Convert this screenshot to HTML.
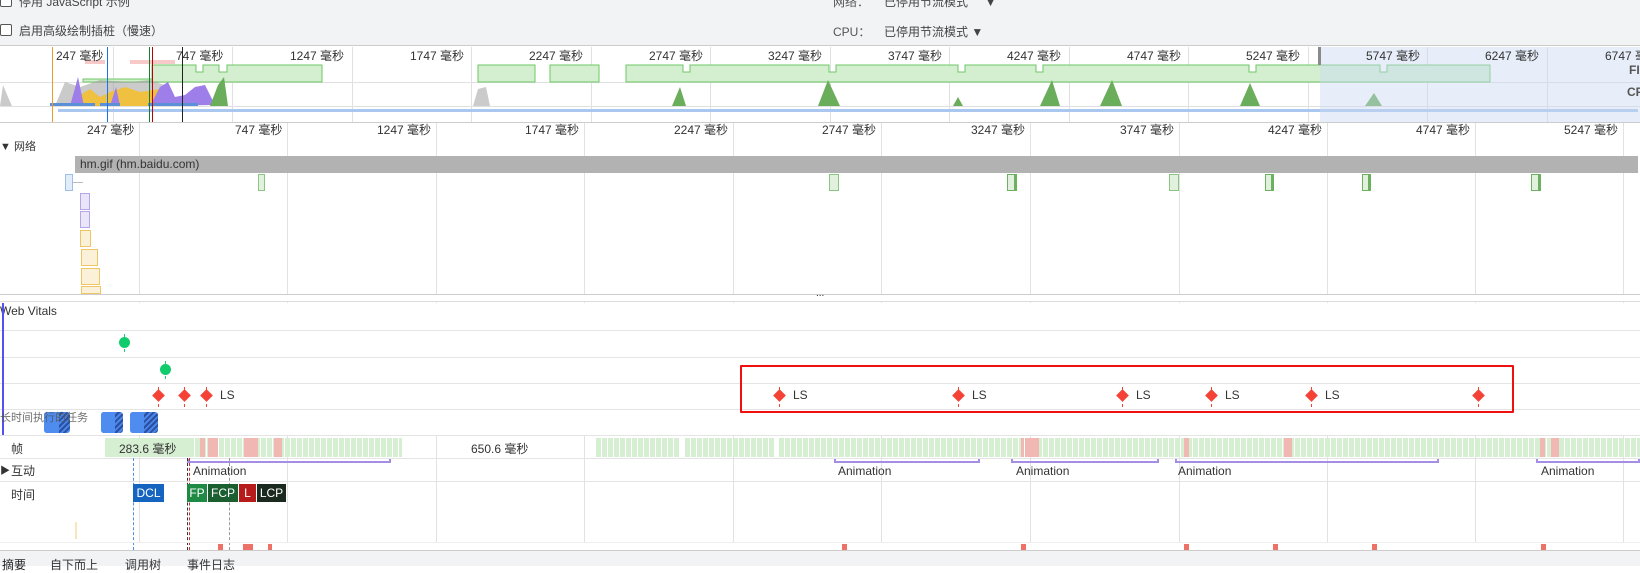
<!DOCTYPE html>
<html><head><meta charset="utf-8"><style>
*{margin:0;padding:0;box-sizing:border-box}
body{width:1640px;height:566px;overflow:hidden;background:#fff;font-family:"Liberation Sans","Noto Sans CJK SC",sans-serif;font-size:12px;color:#333;position:relative}
.a{position:absolute}
.t{position:absolute;white-space:nowrap}
.vl{position:absolute;width:1px;background:#e2e2e2}
.hl{position:absolute;height:1px;background:#e4e4e4;left:0;width:1640px}
.cb{position:absolute;width:12px;height:12px;border:1px solid #555;border-radius:2px;background:#fff}
.fr{position:absolute;top:438px;height:19px;background:repeating-linear-gradient(90deg,#d6efd2 0 5px,#fff 5px 6px)}
.rf{position:absolute;top:438px;height:19px;background:#f0b7b3}
.an{position:absolute;top:459px;height:4px;border:2px solid #a58fe6;border-top:none}
.anl{position:absolute;top:464px;color:#333}
.dm{position:absolute;width:9px;height:9px;background:#f44336;transform:rotate(45deg)}
.dd{position:absolute;width:0;border-left:1px dashed #f44336}
.mk{position:absolute;top:484px;height:18px;color:#fff;font-size:12px;line-height:18px;text-align:center}
</style></head><body>
<!-- toolbar -->
<div class="a" style="left:0;top:0;width:1640px;height:46px;background:#f1f3f4;border-bottom:1px solid #ccc"></div>
<div class="cb" style="top:-5px;left:0"></div>
<div class="t" style="left:19px;top:-7px;color:#444">停用 JavaScript 示例</div>
<div class="cb" style="top:24px;left:0"></div>
<div class="t" style="left:19px;top:22px;color:#444">启用高级绘制插桩（慢速）</div>
<div class="t" style="left:833px;top:-7px;color:#555">网络：</div>
<div class="t" style="left:884px;top:-7px;color:#444">已停用节流模式 &nbsp; &nbsp; ▼</div>
<div class="t" style="left:833px;top:23px;color:#555">CPU：</div>
<div class="t" style="left:884px;top:23px;color:#444">已停用节流模式 ▼</div>

<!-- overview -->
<svg class="a" style="left:0;top:47px" width="1640" height="76">
<g stroke="#e0e0e0" stroke-width="1">
<line x1="113.5" y1="0" x2="113.5" y2="76"/><line x1="232.5" y1="0" x2="232.5" y2="76"/><line x1="352.5" y1="0" x2="352.5" y2="76"/><line x1="471.5" y1="0" x2="471.5" y2="76"/><line x1="591.5" y1="0" x2="591.5" y2="76"/><line x1="710.5" y1="0" x2="710.5" y2="76"/><line x1="830.5" y1="0" x2="830.5" y2="76"/><line x1="949.5" y1="0" x2="949.5" y2="76"/><line x1="1069.5" y1="0" x2="1069.5" y2="76"/><line x1="1188.5" y1="0" x2="1188.5" y2="76"/><line x1="1308.5" y1="0" x2="1308.5" y2="76"/><line x1="1427.5" y1="0" x2="1427.5" y2="76"/><line x1="1547.5" y1="0" x2="1547.5" y2="76"/>
<line x1="0" y1="35.5" x2="1640" y2="35.5"/><line x1="0" y1="59.5" x2="1640" y2="59.5"/>
</g>
<g fill="#d4efcf" stroke="#6bc764" stroke-width="1">
<path d="M83 35V32H152V35Z"/>
<path d="M152 35V18H196V25H203V18H219V25H227V18H322V35Z"/>
<path d="M478 35V18H535V35Z"/><path d="M550 35V18H599V35Z"/>
<path d="M626 35V18H683V25H690V18H829V25H836V18H958V25H965V18H1036V25H1043V18H1249V25H1256V18H1380V25H1387V18H1490V35Z"/>
</g>
<g fill="#a0a0a0" opacity=".55"><path d="M0 59L3 38 8 50 12 59Z"/><path d="M55 59L65 35 80 40 100 33 130 35 150 33 170 40 175 59Z"/><path d="M473 59L478 42 486 40 490 59Z"/></g>
<path d="M70 59L80 48 90 42 100 50 110 45 125 40 140 45 160 42 175 55 185 59Z" fill="#f0c040"/>
<path d="M70 59L78 30 84 59Z M110 59L116 40 120 59Z M150 59L160 40 168 35 175 50 185 48 195 40 205 38 215 58Z" fill="#9e7ee8"/>
<path d="M210 59L218 38 224 30 228 59Z" fill="#6aad5a"/>
<g fill="#6aad5a"><path d="M672 59L680 40 686 59Z"/><path d="M818 59L828 33 840 59Z"/><path d="M953 59L958 50 963 59Z"/><path d="M1040 59L1052 33 1060 59Z"/><path d="M1100 59L1112 33 1122 59Z"/><path d="M1240 59L1250 36 1260 59Z"/><path d="M1365 59L1374 46 1382 59Z"/></g>
<rect x="50" y="56" width="45" height="3" fill="#5b8fd6"/><rect x="100" y="56" width="20" height="3" fill="#5b8fd6"/><rect x="148" y="56" width="50" height="3" fill="#5b8fd6"/>
<rect x="58" y="62" width="1580" height="3" fill="#a9c7ef"/>
<rect x="85" y="13" width="20" height="4" fill="#f7c9c9"/><rect x="130" y="13" width="45" height="4" fill="#f7c9c9"/>
<line x1="52.5" y1="0" x2="52.5" y2="76" stroke="#f09a2a"/><line x1="107.5" y1="0" x2="107.5" y2="76" stroke="#1a73e8"/><line x1="149.5" y1="0" x2="149.5" y2="76" stroke="#1e7a36"/><line x1="152.5" y1="0" x2="152.5" y2="76" stroke="#b00"/><line x1="182.5" y1="0" x2="182.5" y2="76" stroke="#222"/>
<rect x="1320" y="0" width="320" height="76" fill="#c9d9f2" opacity=".45"/>
<rect x="1318" y="0" width="3" height="18" fill="#8a8a8a"/>
</svg>
<div class="t" style="left:56px;top:47px;font-size:12px">247 毫秒</div>
<div class="t" style="left:176px;top:47px">747 毫秒</div>
<div class="t" style="left:290px;top:47px">1247 毫秒</div>
<div class="t" style="left:410px;top:47px">1747 毫秒</div>
<div class="t" style="left:529px;top:47px">2247 毫秒</div>
<div class="t" style="left:649px;top:47px">2747 毫秒</div>
<div class="t" style="left:768px;top:47px">3247 毫秒</div>
<div class="t" style="left:888px;top:47px">3747 毫秒</div>
<div class="t" style="left:1007px;top:47px">4247 毫秒</div>
<div class="t" style="left:1127px;top:47px">4747 毫秒</div>
<div class="t" style="left:1246px;top:47px">5247 毫秒</div>
<div class="t" style="left:1366px;top:47px">5747 毫秒</div>
<div class="t" style="left:1485px;top:47px">6247 毫秒</div>
<div class="t" style="left:1605px;top:47px">6747 毫</div>
<div class="t" style="left:1629px;top:63px;font-weight:bold;color:#555">FI</div>
<div class="t" style="left:1627px;top:85px;font-weight:bold;color:#555">CP</div>
<div class="hl" style="top:122px;background:#ccc"></div>

<!-- main grid lines -->
<div class="vl" style="left:139px;top:123px;height:420px"></div>
<div class="vl" style="left:287px;top:123px;height:420px"></div>
<div class="vl" style="left:436px;top:123px;height:420px"></div>
<div class="vl" style="left:584px;top:123px;height:420px"></div>
<div class="vl" style="left:733px;top:123px;height:420px"></div>
<div class="vl" style="left:881px;top:123px;height:420px"></div>
<div class="vl" style="left:1030px;top:123px;height:420px"></div>
<div class="vl" style="left:1179px;top:123px;height:420px"></div>
<div class="vl" style="left:1327px;top:123px;height:420px"></div>
<div class="vl" style="left:1475px;top:123px;height:420px"></div>
<div class="vl" style="left:1623px;top:123px;height:420px"></div>
<div class="t" style="left:87px;top:121px">247 毫秒</div>
<div class="t" style="left:235px;top:121px">747 毫秒</div>
<div class="t" style="left:377px;top:121px">1247 毫秒</div>
<div class="t" style="left:525px;top:121px">1747 毫秒</div>
<div class="t" style="left:674px;top:121px">2247 毫秒</div>
<div class="t" style="left:822px;top:121px">2747 毫秒</div>
<div class="t" style="left:971px;top:121px">3247 毫秒</div>
<div class="t" style="left:1120px;top:121px">3747 毫秒</div>
<div class="t" style="left:1268px;top:121px">4247 毫秒</div>
<div class="t" style="left:1416px;top:121px">4747 毫秒</div>
<div class="t" style="left:1564px;top:121px">5247 毫秒</div>

<!-- network -->
<div class="t" style="left:0;top:138px;font-size:11px">▼ 网络</div>
<div class="a" style="left:75px;top:156px;width:1563px;height:17px;background:#b2b2b2"></div>
<div class="t" style="left:80px;top:157px;color:#333">hm.gif (hm.baidu.com)</div>
<div class="a" style="left:65px;top:174px;width:8px;height:17px;background:#e3ecf9;border:1px solid #9ebde9"></div><div class="a" style="left:73px;top:182px;width:10px;height:1px;background:#bbb"></div>
<div class="a" style="left:80px;top:193px;width:10px;height:17px;background:#ebe5fa;border:1px solid #b7a5ea"></div>
<div class="a" style="left:80px;top:211px;width:10px;height:17px;background:#ebe5fa;border:1px solid #b7a5ea"></div>
<div class="a" style="left:80px;top:230px;width:11px;height:17px;background:#fbf0d8;border:1px solid #f0c565"></div>
<div class="a" style="left:81px;top:249px;width:17px;height:17px;background:#fbf0d8;border:1px solid #f0c565"></div>
<div class="a" style="left:81px;top:268px;width:19px;height:17px;background:#fbf0d8;border:1px solid #f0c565"></div>
<div class="a" style="left:81px;top:286px;width:20px;height:8px;background:#fbf0d8;border:1px solid #f0c565"></div>
<div class="a" style="left:258px;top:174px;width:7px;height:17px;background:#e2f0de;border:1px solid #8ac682"></div>
<div class="a" style="left:829px;top:174px;width:10px;height:17px;background:#e2f0de;border:1px solid #8ac682"></div>
<div class="a" style="left:1007px;top:174px;width:10px;height:17px;background:#e2f0de;border:1px solid #6bb15f;border-right-width:3px"></div>
<div class="a" style="left:1169px;top:174px;width:10px;height:17px;background:#e2f0de;border:1px solid #8ac682"></div>
<div class="a" style="left:1265px;top:174px;width:9px;height:17px;background:#e2f0de;border:1px solid #6bb15f;border-right-width:3px"></div>
<div class="a" style="left:1362px;top:174px;width:9px;height:17px;background:#e2f0de;border:1px solid #6bb15f;border-right-width:3px"></div>
<div class="a" style="left:1531px;top:174px;width:10px;height:17px;background:#e2f0de;border:1px solid #6bb15f;border-right-width:3px"></div>
<div class="a" style="left:0;top:294px;width:1640px;height:8px;background:#fff;border-top:1px solid #ccc;border-bottom:1px solid #ddd"></div>
<div class="t" style="left:816px;top:288px;font-size:10px">...</div>

<!-- web vitals -->
<div class="a" style="left:0;top:303px;width:1640px;height:132px;background:#fff"></div>
<div class="t" style="left:0;top:304px">Web Vitals</div>
<div class="hl" style="top:330px"></div><div class="hl" style="top:357px"></div><div class="hl" style="top:383px"></div><div class="hl" style="top:409px"></div><div class="hl" style="top:435px"></div>
<div class="a" style="left:2px;top:303px;width:2px;height:132px;background:#5252f0"></div>
<div class="dd" style="left:124px;top:334px;height:18px;border-color:#1ccb74"></div>
<div class="a" style="left:119px;top:337px;width:11px;height:11px;border-radius:50%;background:#10cc6c"></div>
<div class="dd" style="left:165px;top:361px;height:18px;border-color:#1ccb74"></div>
<div class="a" style="left:160px;top:364px;width:11px;height:11px;border-radius:50%;background:#10cc6c"></div>
<div class="dd" style="left:158px;top:387px;height:20px"></div><div class="dm" style="left:154px;top:391px"></div>
<div class="dd" style="left:184px;top:387px;height:20px"></div><div class="dm" style="left:180px;top:391px"></div>
<div class="dd" style="left:206px;top:387px;height:20px"></div><div class="dm" style="left:202px;top:391px"></div>
<div class="t" style="left:220px;top:388px">LS</div>
<div class="dd" style="left:779px;top:387px;height:20px"></div><div class="dm" style="left:775px;top:391px"></div><div class="t" style="left:793px;top:388px">LS</div>
<div class="dd" style="left:958px;top:387px;height:20px"></div><div class="dm" style="left:954px;top:391px"></div><div class="t" style="left:972px;top:388px">LS</div>
<div class="dd" style="left:1122px;top:387px;height:20px"></div><div class="dm" style="left:1118px;top:391px"></div><div class="t" style="left:1136px;top:388px">LS</div>
<div class="dd" style="left:1211px;top:387px;height:20px"></div><div class="dm" style="left:1207px;top:391px"></div><div class="t" style="left:1225px;top:388px">LS</div>
<div class="dd" style="left:1311px;top:387px;height:20px"></div><div class="dm" style="left:1307px;top:391px"></div><div class="t" style="left:1325px;top:388px">LS</div>
<div class="dd" style="left:1478px;top:387px;height:20px"></div><div class="dm" style="left:1474px;top:391px"></div>
<div class="a" style="left:740px;top:365px;width:774px;height:48px;border:2px solid #f01010;border-radius:1px"></div>
<!-- long tasks -->
<div class="a" style="left:44px;top:412px;width:26px;height:21px;border-radius:3px;background:repeating-linear-gradient(135deg,#2a4fa0 0 2px,#4a86e8 2px 4px)"></div>
<div class="a" style="left:44px;top:412px;width:15px;height:21px;border-radius:3px 0 0 3px;background:#4f8cf0"></div>
<div class="a" style="left:101px;top:412px;width:22px;height:21px;border-radius:3px;background:repeating-linear-gradient(135deg,#2a4fa0 0 2px,#4a86e8 2px 4px)"></div>
<div class="a" style="left:101px;top:412px;width:14px;height:21px;border-radius:3px 0 0 3px;background:#4f8cf0"></div>
<div class="a" style="left:130px;top:412px;width:28px;height:21px;border-radius:3px;background:repeating-linear-gradient(135deg,#2a4fa0 0 2px,#4a86e8 2px 4px)"></div>
<div class="a" style="left:130px;top:412px;width:14px;height:21px;border-radius:3px 0 0 3px;background:#4f8cf0"></div>
<div class="t" style="left:0;top:409px;color:#555;font-size:11px;opacity:.85">长时间执行的任务</div>

<!-- frames -->
<div class="t" style="left:11px;top:440px">帧</div>
<div class="a" style="left:105px;top:438px;width:84px;height:19px;background:#d6efd2"></div>
<div class="fr" style="left:189px;width:213px"></div>
<div class="rf" style="left:200px;width:5px"></div><div class="rf" style="left:208px;width:10px"></div><div class="rf" style="left:244px;width:14px"></div><div class="rf" style="left:274px;width:8px"></div>
<div class="t" style="left:119px;top:440px">283.6 毫秒</div>
<div class="t" style="left:471px;top:440px">650.6 毫秒</div>
<div class="fr" style="left:596px;width:84px"></div>
<div class="fr" style="left:685px;width:89px"></div>
<div class="fr" style="left:779px;width:861px"></div>
<div class="rf" style="left:1021px;width:3px"></div><div class="rf" style="left:1025px;width:14px"></div><div class="rf" style="left:1184px;width:5px"></div><div class="rf" style="left:1284px;width:8px"></div><div class="rf" style="left:1540px;width:5px"></div><div class="rf" style="left:1551px;width:8px"></div>
<div class="hl" style="top:458px"></div>
<!-- interactions -->
<div class="t" style="left:0;top:462px;font-size:10px">▶</div><div class="t" style="left:11px;top:462px">互动</div>
<div class="an" style="left:187px;width:204px"></div><div class="anl" style="left:193px">Animation</div>
<div class="an" style="left:834px;width:146px"></div><div class="anl" style="left:838px">Animation</div>
<div class="an" style="left:1011px;width:148px"></div><div class="anl" style="left:1016px">Animation</div>
<div class="an" style="left:1175px;width:264px"></div><div class="anl" style="left:1178px">Animation</div>
<div class="an" style="left:1536px;width:104px"></div><div class="anl" style="left:1541px">Animation</div>
<div class="hl" style="top:481px"></div>
<!-- timings -->
<div class="t" style="left:11px;top:486px">时间</div>
<div class="dd" style="left:133px;top:458px;height:92px;border-left-color:#4f8ee0"></div>
<div class="dd" style="left:187px;top:458px;height:92px;border-left-color:#333"></div>
<div class="dd" style="left:189px;top:458px;height:92px;border-left-color:#c33"></div>
<div class="dd" style="left:229px;top:458px;height:92px;border-left-color:#999"></div>
<div class="mk" style="left:133px;width:31px;background:#1565c0">DCL</div>
<div class="mk" style="left:187px;width:20px;background:#1e8a43">FP</div>
<div class="mk" style="left:208px;width:30px;background:#1b5e30">FCP</div>
<div class="mk" style="left:239px;width:17px;background:#b71c1c">L</div>
<div class="mk" style="left:257px;width:29px;background:#1b2a1e">LCP</div>
<div class="a" style="left:75px;top:522px;width:2px;height:17px;background:#fbe5bd"></div>
<div class="hl" style="top:542px;background:#eee"></div>
<div class="a" style="left:218px;top:544px;width:5px;height:7px;background:#ee7168"></div>
<div class="a" style="left:243px;top:544px;width:10px;height:7px;background:#ee7168"></div>
<div class="a" style="left:268px;top:544px;width:4px;height:7px;background:#ee7168"></div>
<div class="a" style="left:842px;top:544px;width:5px;height:7px;background:#ee7168"></div>
<div class="a" style="left:1021px;top:544px;width:5px;height:7px;background:#ee7168"></div>
<div class="a" style="left:1184px;top:544px;width:5px;height:7px;background:#ee7168"></div>
<div class="a" style="left:1273px;top:544px;width:5px;height:7px;background:#ee7168"></div>
<div class="a" style="left:1372px;top:544px;width:5px;height:7px;background:#ee7168"></div>
<div class="a" style="left:1541px;top:544px;width:5px;height:7px;background:#ee7168"></div>
<!-- bottom tabs -->
<div class="a" style="left:0;top:550px;width:1640px;height:16px;background:#f1f3f4;border-top:1px solid #ccc"></div>
<div class="t" style="left:2px;top:556px;color:#222">摘要</div>
<div class="t" style="left:50px;top:556px;color:#333">自下而上</div>
<div class="t" style="left:125px;top:556px;color:#333">调用树</div>
<div class="t" style="left:187px;top:556px;color:#333">事件日志</div>
</body></html>
